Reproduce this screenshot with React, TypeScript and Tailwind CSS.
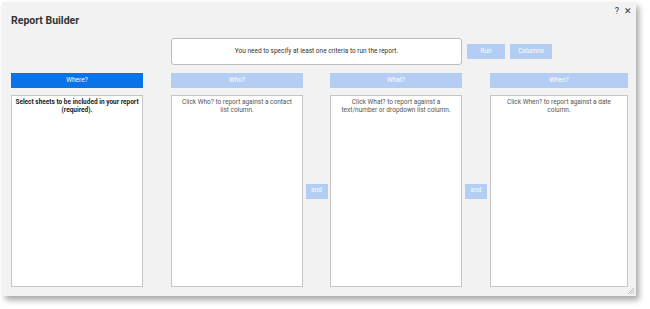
import React from "react";

const font = { fontFamily: "Roboto, 'Liberation Sans', sans-serif" };

function Header({ label, active, w }: { label: string; active?: boolean; w: string }) {
  return (
    <div
      className={`${w} h-[15px] flex items-center justify-center text-[6.5px] text-white ${
        active ? "bg-[#0a73e8]" : "bg-[#b3cdf3]"
      }`}
    >
      {label}
    </div>
  );
}

function Box({ children, w, bold }: { children: React.ReactNode; w: string; bold?: boolean }) {
  return (
    <div
      className={`${w} h-[192px] bg-white border border-[#c6c6c6] pt-[2px] text-center text-[6.5px] leading-[8px] ${
        bold ? "font-bold text-[#222] px-0" : "text-[#555] px-[8px]"
      }`}
    >
      {children}
    </div>
  );
}

function AndButton() {
  return (
    <div className="w-[22px] h-[15px] bg-[#b3cdf3] text-white text-[6.5px] flex items-center justify-center">
      and
    </div>
  );
}

export default function App() {
  return (
    <div className="w-[650px] h-[309px] bg-white pt-[2px] pl-[2px]" style={font}>
      <div className="relative w-[634px] h-[294px] bg-[#f2f2f2] shadow-[3px_4px_6px_rgba(0,0,0,0.35)] pl-[9px] pr-[8px] pt-[12px] flex flex-col">
        <div className="absolute top-[3px] right-[4px] flex gap-[5px] text-[9px] text-[#333]">
          <span>?</span>
          <span>✕</span>
        </div>

        <h1 className="text-[10.5px] leading-[14px] font-bold text-[#333]">Report Builder</h1>

        <div className="flex items-center ml-[160px] mt-[10px] gap-[5px]">
          <div className="w-[291px] h-[27px] bg-white border border-[#bdbdbd] rounded-[3px] flex items-center justify-center text-[6.5px] text-[#333]">
            You need to specify at least one criteria to run the report.
          </div>
          <div className="w-[38px] h-[15px] bg-[#b3cdf3] text-white text-[6.5px] flex items-center justify-center">
            Run
          </div>
          <div className="w-[42px] h-[15px] bg-[#b3cdf3] text-white text-[6.5px] flex items-center justify-center">
            Columns
          </div>
        </div>

        <div className="flex mt-[8px]">
          <Header label="Where?" active w="w-[132px]" />
          <div className="w-[28px]" />
          <Header label="Who?" w="w-[132px]" />
          <div className="w-[27px]" />
          <Header label="What?" w="w-[132px]" />
          <div className="w-[28px]" />
          <Header label="When?" w="w-[138px]" />
        </div>

        <div className="flex mt-[7px]">
          <Box w="w-[132px]" bold>
            Select sheets to be included in your report (required).
          </Box>
          <div className="w-[28px]" />
          <Box w="w-[132px]">Click Who? to report against a contact list column.</Box>
          <div className="w-[27px] flex items-center justify-center">
            <AndButton />
          </div>
          <Box w="w-[132px]">Click What? to report against a text/number or dropdown list column.</Box>
          <div className="w-[28px] flex items-center justify-center">
            <AndButton />
          </div>
          <Box w="w-[138px]">Click When? to report against a date column.</Box>
        </div>

        <svg className="absolute right-[1px] bottom-[1px]" width="8" height="8" viewBox="0 0 8 8">
          <line x1="7" y1="1" x2="1" y2="7" stroke="#aaa" strokeWidth="0.8" />
          <line x1="7" y1="3.5" x2="3.5" y2="7" stroke="#aaa" strokeWidth="0.8" />
          <line x1="7" y1="6" x2="6" y2="7" stroke="#aaa" strokeWidth="0.8" />
        </svg>
      </div>
    </div>
  );
}
